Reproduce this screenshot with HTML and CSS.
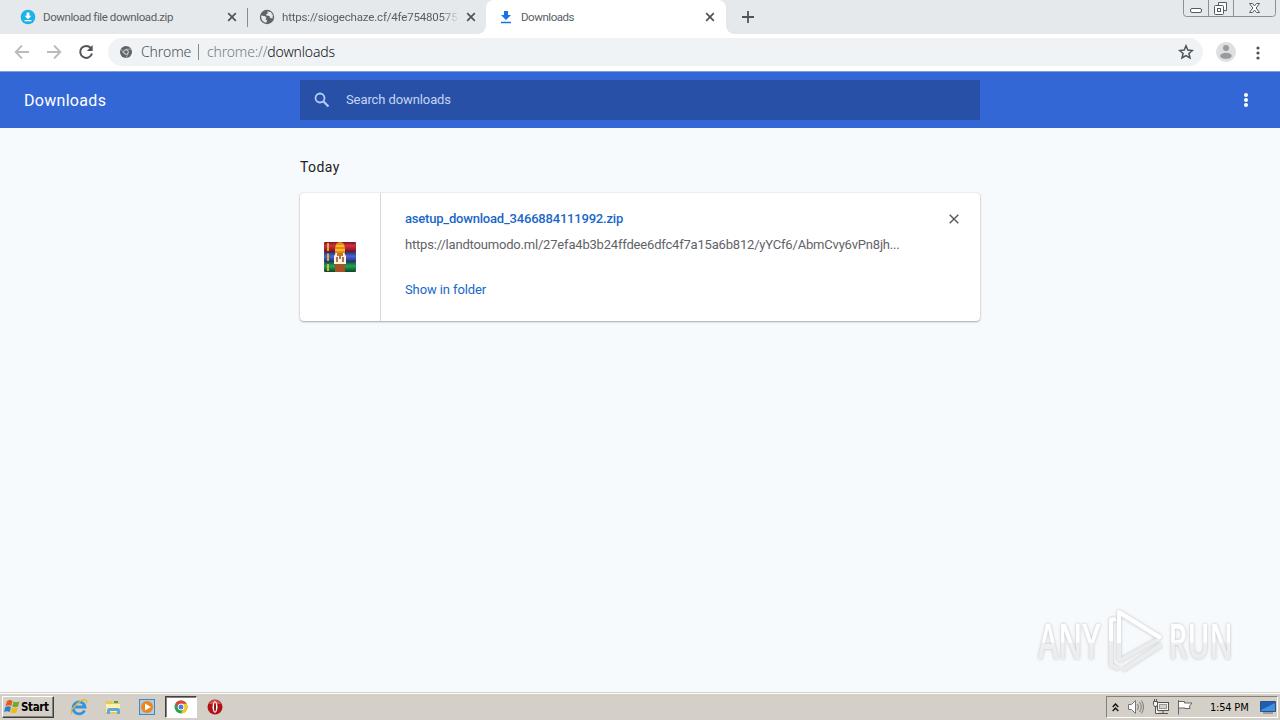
FILE: index.html
```html
<!DOCTYPE html>
<html lang="en">
<head>
    <meta charset="UTF-8">
    <meta name="viewport" content="width=device-width, initial-scale=1.0">
    <title>Downloads</title>
    <link rel="stylesheet" href="styles.css">
</head>
<body>
    <div class="tabs">
        <div class="tab first">
            <svg width="16" height="16" viewBox="0 0 16 16"><circle cx="8" cy="8" r="7.3" fill="#1cb2e5"/><path d="M6.6 3.5h2.8v3.3h2L8 10.2 4.600 6.800h2zM4.600 11h6.800v1.300H4.600z" fill="#fff"/></svg>
            <span class="title t1">Download file download.zip</span>
            <svg class="x" width="10" height="10" viewBox="0 0 10 10"><path d="M1.200 1.200l7.600 7.600M8.800 1.200L1.200 8.800"/></svg>
        </div>
        <div class="tab second">
            <svg width="16" height="16" viewBox="0 0 16 16"><circle cx="8" cy="8" r="7.200" fill="#5f6368"/><path d="M2.200 6.500l4 .8 1.300 1.700-1 1.300 1.600 1.300-.7 2.200C4 13.600 1.700 10 2.200 6.500zM8 2.400l3.800.7 2 2.900-.2 3.400-2.400-.5-.8-2-3-.3-.2-1.400 1.800-1z" fill="#e5e9ec"/></svg>
            <span class="title t2">https://siogechaze.cf/4fe75480575</span>
            <svg class="x" width="10" height="10" viewBox="0 0 10 10"><path d="M1.200 1.200l7.600 7.600M8.800 1.200L1.200 8.800"/></svg>
        </div>
        <div class="tab active">
            <svg width="12" height="13" viewBox="0 0 12 13"><path d="M4 0h4v4h3L6 9 1 4h3zM1 10.700h10v1.500H1z" fill="#1a73e8"/></svg>
            <span class="title t3">Downloads</span>
            <svg class="x" width="10" height="10" viewBox="0 0 10 10"><path d="M1.200 1.200l7.600 7.600M8.800 1.200L1.200 8.800"/></svg>
        </div>
        <svg class="plus" width="12" height="12" viewBox="0 0 12 12"><path d="M6 0v12M0 6h12" stroke="#505458" stroke-width="1.800"/></svg>
        <div class="win-btns">
            <svg width="93" height="17" viewBox="0 0 93 17" fill="none" stroke="#8b9095">
                <path d="M.5 0v13.500q0 3 3 3h86q3 0 3-3V0M25.500 0v16M50.500 0v16"/>
                <g stroke="#555b65"><rect x="7.500" y="8.500" width="11" height="4" rx="1.500" fill="#fff"/>
                <path d="M35.500 5.500v-3h8v8h-3" fill="#fff"/><rect x="31.500" y="5.500" width="9" height="9" rx="1" fill="#fff"/><rect x="34.500" y="8.500" width="3" height="3"/>
                <path d="M66.500 3.500h3l2 2.500 2-2.500h3l-3.400 4.500 3.400 4.500h-3l-2-2.500-2 2.500h-3l3.400-4.500z" fill="#fff"/></g>
            </svg>
        </div>
    </div>

    <div class="toolbar">
        <svg class="nav" width="16" height="16" viewBox="0 0 16 16"><path d="M15 8H2M8 1.500L1.700 8 8 14.500" stroke="#b9bbbd"/></svg>
        <svg class="nav" width="16" height="16" viewBox="0 0 16 16"><path d="M1 8h13M8 1.500L14.300 8 8 14.500" stroke="#b9bbbd"/></svg>
        <svg class="nav" width="16" height="16" viewBox="0 0 16 16"><path d="M12.800 4A6 6 0 1 0 14 9.500" stroke="#505458" stroke-width="2"/><path d="M14.700 1v6H8.800z" fill="#505458"/></svg>
        <div class="omnibox">
            <svg width="12" height="12" viewBox="0 0 12 12"><circle cx="6" cy="6" r="6" fill="#5f6368"/><path d="M6 3.200h5.200M3.600 7.400L1 3M8.400 7.400L6 11.800" stroke="#c8cccf" stroke-width=".7"/><circle cx="6" cy="6" r="2.300" fill="#5f6368" stroke="#e2e5e7"/></svg>
            <span class="chip">Chrome</span>
            <span class="sep"></span>
            <span class="url"><i>chrome://</i>downloads</span>
            <svg class="star" width="16" height="16" viewBox="0 0 16 16"><path d="M8 1.800l1.800 4.300 4.600.4-3.500 3 1.100 4.500L8 11.600 4 14l1.100-4.500-3.500-3 4.600-.4z" fill="none" stroke="#505458" stroke-width="1.500"/></svg>
        </div>
        <svg class="avatar" width="20" height="20" viewBox="0 0 20 20"><circle cx="10" cy="10" r="10" fill="#dedfe0"/><circle cx="10" cy="6" r="3" fill="#999c9f"/><ellipse cx="10" cy="13.800" rx="5.800" ry="3" fill="#999c9f"/></svg>
        <svg width="4" height="14" viewBox="0 0 4 14" fill="#505458"><circle cx="2" cy="2" r="1.600"/><circle cx="2" cy="7" r="1.600"/><circle cx="2" cy="12" r="1.600"/></svg>
    </div>

    <header>
        <h1>Downloads</h1>
        <div class="search">
            <svg width="16" height="16" viewBox="0 0 16 16" fill="none" stroke="#b6cdf3"><circle cx="6" cy="6" r="4.500" stroke-width="1.800"/><path d="M9.500 9.500l5 5" stroke-width="2.200"/></svg>
            <span>Search downloads</span>
        </div>
        <svg class="more" width="4" height="14" viewBox="0 0 4 14" fill="#fff"><circle cx="2" cy="2" r="2"/><circle cx="2" cy="7" r="2"/><circle cx="2" cy="12" r="2"/></svg>
    </header>

    <main>
        <h2>Today</h2>
        <div class="card">
            <div class="file-icon">
                <svg width="34" height="32" viewBox="0 0 34 32">
                    <defs>
                        <linearGradient id="red" x2="0" y2="1"><stop offset="0" stop-color="#7d1424"/><stop offset=".35" stop-color="#d03042"/><stop offset="1" stop-color="#6d0c1b"/></linearGradient>
                        <linearGradient id="blue" x2="0" y2="1"><stop offset="0" stop-color="#263173"/><stop offset=".4" stop-color="#4c62d4"/><stop offset="1" stop-color="#202762"/></linearGradient>
                        <linearGradient id="green" x2="0" y2="1"><stop offset="0" stop-color="#0e5734"/><stop offset=".4" stop-color="#22a35a"/><stop offset="1" stop-color="#0b4525"/></linearGradient>
                    </defs>
                    <rect x="1" y="1" width="32" height="10.500" rx="1" fill="url(#red)"/>
                    <rect x="1" y="11" width="32" height="10.500" rx="1" fill="url(#blue)"/>
                    <rect x="1" y="21" width="32" height="10" rx="1" fill="url(#green)"/>
                    <path d="M5 2v8M5 12.500v7.500M5 23v7" stroke="#d9b52e" stroke-width="2"/>
                    <path d="M12 23h10v8H12z" fill="#a65225"/>
                    <path d="M12 8q0-7 5-7t5 7v6H12z" fill="#e58e14"/>
                    <path d="M13 5h8M12 9h10" stroke="#ffc33a" stroke-width="1.500"/>
                    <path d="M13 12h8l2 3v8H11v-8z" fill="#fff3df"/>
                    <path d="M14 12h6v3h-6z" fill="#c4741c"/>
                    <path d="M14 16v5M17 15v3M20 16v5" stroke="#8c4e2a" stroke-width="1.500"/>
                </svg>
            </div>
            <div class="details">
                <a class="name">asetup_download_3466884111992.zip</a>
                <p class="source">https://landtoumodo.ml/27efa4b3b24ffdee6dfc4f7a15a6b812/yYCf6/AbmCvy6vPn8jh...</p>
                <a class="show">Show in folder</a>
            </div>
            <svg class="remove" width="10" height="10" viewBox="0 0 10 10"><path d="M.7.7l8.600 8.600M9.300.7L.7 9.300" stroke="#54585c" stroke-width="1.400"/></svg>
        </div>
        <div class="watermark">
            <svg width="214" height="76" viewBox="0 0 214 76">
                <defs>
                    <linearGradient id="wm" gradientUnits="userSpaceOnUse" x1="0" x2="0" y1="-35" y2="0"><stop offset="0" stop-color="#fff"/><stop offset=".52" stop-color="#fff"/><stop offset=".54" stop-color="#eff0f1"/><stop offset="1" stop-color="#ebeced"/></linearGradient>
                    <filter id="glow" x="-10%" y="-10%" width="120%" height="120%"><feDropShadow dx="0" dy="0" stdDeviation="1.600" flood-color="#8d9093" flood-opacity=".6"/></filter>
                </defs>
                <g filter="url(#glow)">
                    <text transform="translate(6 56) scale(.64 1)" fill="url(#wm)">ANY</text>
                    <text transform="translate(136.500 56) scale(.62 1)" fill="url(#wm)">RUN</text>
                    <g fill="none" stroke-width="4" stroke-linejoin="round">
                        <path d="M84 16l-5 1v45l8 4" stroke="#ebeced"/>
                        <path d="M84 16l-5 1v21" stroke="#fff"/>
                        <path d="M87 58V10l41 25M87 58l40-22M91 67l38-25" stroke="#ebeced"/>
                        <path d="M87 40V9l42 26" stroke="#fff"/>
                    </g>
                </g>
            </svg>
        </div>
    </main>

    <footer>
        <div class="start">
            <svg width="17" height="16" viewBox="0 0 17 16"><path d="M3 2q3-2 5.500 0L7.300 7Q4.500 5.500 1.500 7z" fill="#e45b21"/><path d="M9.500 2.500q3 1.500 6 0L14 7.500q-3 1.500-5.700 0z" fill="#70a82c"/><path d="M1.300 8q3-1.500 5.700 0L5.700 13Q3 11.500 0 13z" fill="#2c7fc6"/><path d="M8 8.500q3 1.500 5.700 0L12.300 13.500q-3 1.500-5.600 0z" fill="#f3b816"/></svg>
            <b>Start</b>
        </div>
        <div class="launch">
            <svg width="18" height="18" viewBox="0 0 18 18" fill="none"><path d="M14.500 12.500A6 6 0 1 1 15 9H5" stroke="#3295dc" stroke-width="2.800"/><path d="M2 16Q-1 13 7 6T16.500 2.500Q17 4 16 5" stroke="#e7b436" stroke-width="1.300"/></svg>
        </div>
        <div class="launch">
            <svg width="18" height="18" viewBox="0 0 18 18"><path d="M1.500 3h6l1.500 2h7v11h-14.500z" fill="#e7c75f"/><path d="M2 6h14v8H2z" fill="#fff0ad"/><path d="M3 16v-4q0-2 2-2h9q2 0 2 2v4h-3v-3H6v3z" fill="#5da9da"/><path d="M10 4h4" stroke="#5c9b3c" stroke-width="2"/></svg>
        </div>
        <div class="launch">
            <svg width="18" height="18" viewBox="0 0 18 18"><rect x="1.500" y="1.500" width="15" height="15" fill="#a9cdea" stroke="#4586bd"/><circle cx="9" cy="9" r="6" fill="#f08418"/><path d="M7 5.500l6 3.500-6 3.500z" fill="#fff"/></svg>
        </div>
        <div class="launch pressed">
            <svg width="14" height="14" viewBox="0 0 14 14"><circle cx="7" cy="7" r="6.500" fill="#2da14b"/><path d="M1.370 3.750A6.500 6.500 0 0 1 12.630 3.750L7 4.500 5 8.500z" fill="#df4332"/><path d="M12.630 3.750A6.500 6.500 0 0 1 7 13.500L9.500 8 7 3.750z" fill="#fbc622"/><circle cx="7" cy="7" r="3" fill="#3f82ea" stroke="#fff"/></svg>
        </div>
        <div class="launch">
            <svg width="16" height="16" viewBox="0 0 16 16"><circle cx="8" cy="8" r="7.500" fill="#b11218"/><path d="M2 5Q4 .8 8 1t6 4z" fill="#d9504d"/><ellipse cx="8" cy="8" rx="2.500" ry="5.800" fill="#fff"/><ellipse cx="8" cy="8" rx="1" ry="4.600" fill="#951016"/></svg>
        </div>
        <div class="tray">
            <svg width="7" height="9" viewBox="0 0 7 9" fill="none" stroke="#111" stroke-width="1.400"><path d="M.7 4l2.800-3 2.800 3M.7 8l2.800-3 2.800 3"/></svg>
            <svg width="18" height="16" viewBox="0 0 18 16" fill="#fff" stroke="#777"><path d="M1.500 5.500h3l4-4v13l-4-4h-3z"/><path d="M10.500 5q2 3 0 6M12.500 3q3.500 5 0 10M14.500 1.500q4 6.500 0 13" fill="none"/></svg>
            <svg width="16" height="16" viewBox="0 0 16 16" fill="#f5f5f2" stroke="#555"><rect x="4.500" y="3.500" width="11" height="8"/><rect x="6.500" y="5.500" width="7" height="4" fill="#d4d0c8" stroke="#999"/><path d="M6 14.500h9M10 12v2.500M2.500 8v6.500H6"/><path d="M.5 2.500h4v3l-1 2h-2l-1-2zM1.500 0v2M3.500 0v2"/></svg>
            <svg width="17" height="16" viewBox="0 0 17 16" fill="#fff" stroke="#666"><path d="M1.500 2.500h6v1.500h7.500l-2.500 3 .5 2.500H8V9H1.500z"/><path d="M1.500 1v14.500"/></svg>
            <span class="clock">1:54 PM</span>
            <svg width="16" height="14" viewBox="0 0 16 14"><path d="M.5 1.500h15v10H.5z" fill="#1c5db6" stroke="#31517b"/><path d="M1 10L15 3v8H1z" fill="#3f91df"/><path d="M3 13h10" stroke="#667"/></svg>
        </div>
    </footer>
</body>
</html>
```
FILE: styles.css
```css
*{
    margin:0;
    padding:0;
    box-sizing: border-box;
}
body{
    width:1280px;
    height:720px;
    overflow:hidden;
    display:flex;
    flex-direction: column;
    background:#f7fafd;
    font-family: Roboto, sans-serif;
}
svg{
    display:block;
    flex:none;
}
/* browser frame */
.tabs{
    height:34px;
    display:flex;
    align-items:center;
    background:#e5e9ec;
    font: 11.5px Roboto, sans-serif;
    color:#5a5e62;
    position: relative;
}
.tab{
    height:34px;
    display:flex;
    align-items:center;
    position: relative;
}
.first{
    width:247px;
    padding-left:20px;
}
.first:after{
    content:'';
    position:absolute;
    right:-1px;
    top:8px;
    width:1px;
    height:19px;
    background:#888c90;
}
.second{
    width:239px;
    padding-left:12px;
}
.active{
    width:240px;
    padding-left:14px;
    background:#fff;
    border-radius: 8px 8px 0 0;
}
.active:before,
.active:after{
    content:'';
    position:absolute;
    bottom:0;
    width:8px;
    height:8px;
}
.active:before{
    left:-8px;
    background: radial-gradient(circle at 0 0, transparent 7.5px, #fff 8px);
}
.active:after{
    right:-8px;
    background: radial-gradient(circle at 100% 0, transparent 7.5px, #fff 8px);
}
.title{
    margin-left:7px;
    white-space: nowrap;
}
.t1{
    width:184px;
    letter-spacing:-0.41px;
}
.t2{
    width:177px;
    margin-right:7px;
    letter-spacing:-0.18px;
    -webkit-mask-image: linear-gradient(to right, #000 160px, transparent 177px);
    mask-image: linear-gradient(to right, #000 160px, transparent 177px);
}
.t3{
    width:176px;
    margin-left:9px;
    margin-right:8px;
    letter-spacing:-0.45px;
}
.x path{
    stroke:#505458;
    stroke-width:1.7;
}
.plus{
    margin-left:16px;
}
.win-btns{
    position:absolute;
    right:4px;
    top:0;
}
.toolbar{
    height:37px;
    display:flex;
    align-items:center;
    padding-left:14px;
    background:#fff;
}
.nav{
    fill:none;
    stroke-width:1.8;
    margin-right:16px;
    margin-bottom:2px;
}
.omnibox{
    width:1095px;
    height:28px;
    margin-left:-2px;
    margin-bottom:1px;
    padding:0 9px 1px 12px;
    display:flex;
    align-items:center;
    border-radius:14px;
    background:#f0f3f5;
    font: 300 14px "Noto Sans", sans-serif;
    color:#111;
}
.chip{
    width:49px;
    margin-left:9px;
    letter-spacing:-0.1px;
    color:#4a4e52;
}
.sep{
    width:1px;
    height:16px;
    margin:0 8px;
    background:#8a8d90;
}
.url{
    letter-spacing:-0.17px;
}
.url i{
    font-style:normal;
    color:#777b7f;
}
.star{
    margin-left:auto;
}
.avatar{
    margin:0 20px 2px 13px;
}
/* downloads page */
header{
    height:57px;
    border-top:1px solid #7e9fdf;
    background:#3367d6;
    display:flex;
    align-items:center;
    color:#fff;
}
h1{
    width:300px;
    padding-left:24px;
    font-size:16px;
    font-weight:400;
    letter-spacing:0.3px;
}
.search{
    width:680px;
    height:40px;
    padding-left:14px;
    display:flex;
    align-items:center;
    background:#2850a7;
    font-size:13px;
    color:#c4d6f5;
}
.search span{
    margin-left:16px;
    margin-bottom:2px;
    letter-spacing:-0.1px;
}
.more{
    margin-left:auto;
    margin-right:32px;
}
main{
    flex:1;
    position:relative;
    padding:31px 300px 0;
}
h2{
    font-size:14px;
    line-height:17px;
    font-weight:400;
    letter-spacing:0.4px;
    color:#202124;
    margin-bottom:17px;
}
.card{
    width:680px;
    height:128px;
    display:flex;
    background:#fff;
    border-radius:4px;
    box-shadow: 0 1px 2px rgba(60,64,67,.4), 0 0 2px rgba(60,64,67,.18);
}
.file-icon{
    width:81px;
    border-right:1px solid #d5d7d9;
    display:flex;
    align-items:center;
    justify-content:center;
}
.details{
    width:568px;
    padding:18px 0 0 24px;
    font-size:13px;
    line-height:16px;
}
.details a{
    display:block;
    color:#1967c8;
}
.details .name{
    font-weight:500;
    letter-spacing:-0.2px;
}
.details .show{
    letter-spacing:-0.1px;
}
.source{
    margin:10px 0 29px;
    color:#5f6368;
    white-space:nowrap;
    letter-spacing:-0.19px;
}
.remove{
    margin-top:21px;
}
.watermark{
    position:absolute;
    right:34px;
    bottom:13px;
}
.watermark text{
    font: 600 48px "Open Sans", sans-serif;
}
/* taskbar */
footer{
    height:28px;
    border-top:1px solid #d4d0c8;
    box-shadow: inset 0 1px #fff;
    background:#d4d0c8;
    padding:3px 2px 2px;
    display:flex;
    align-items:center;
    color:#000;
}
.start{
    width:52px;
    height:22px;
    padding-left:1px;
    margin-right:9px;
    display:flex;
    align-items:center;
    border:1px solid;
    border-color:#fff #404040 #404040 #fff;
    box-shadow: inset -1px -1px #85827b;
    font: 11.5px "DejaVu Sans Condensed", "DejaVu Sans", sans-serif;
}
.start b{
    letter-spacing:-0.35px;
}
.launch{
    width:32px;
    height:22px;
    margin-right:2px;
    display:flex;
    align-items:center;
    justify-content:center;
}
.pressed{
    background:#fff;
    border:1px solid;
    border-color:#404040 #fff #fff #404040;
    box-shadow: inset 1px 1px #85827b;
}
.tray{
    height:22px;
    width:172px;
    margin-left:auto;
    padding:0 1px 0 5px;
    display:flex;
    align-items:center;
    border:1px solid;
    border-color:#85827b #fff #fff #85827b;
}
.tray svg{
    margin-right:8px;
}
.tray svg:last-child{
    margin:0 0 0 auto;
}
.clock{
    margin-left:8px;
    font: 11px "DejaVu Sans Condensed", "DejaVu Sans", sans-serif;
    letter-spacing:-0.2px;
    white-space:nowrap;
}
```
